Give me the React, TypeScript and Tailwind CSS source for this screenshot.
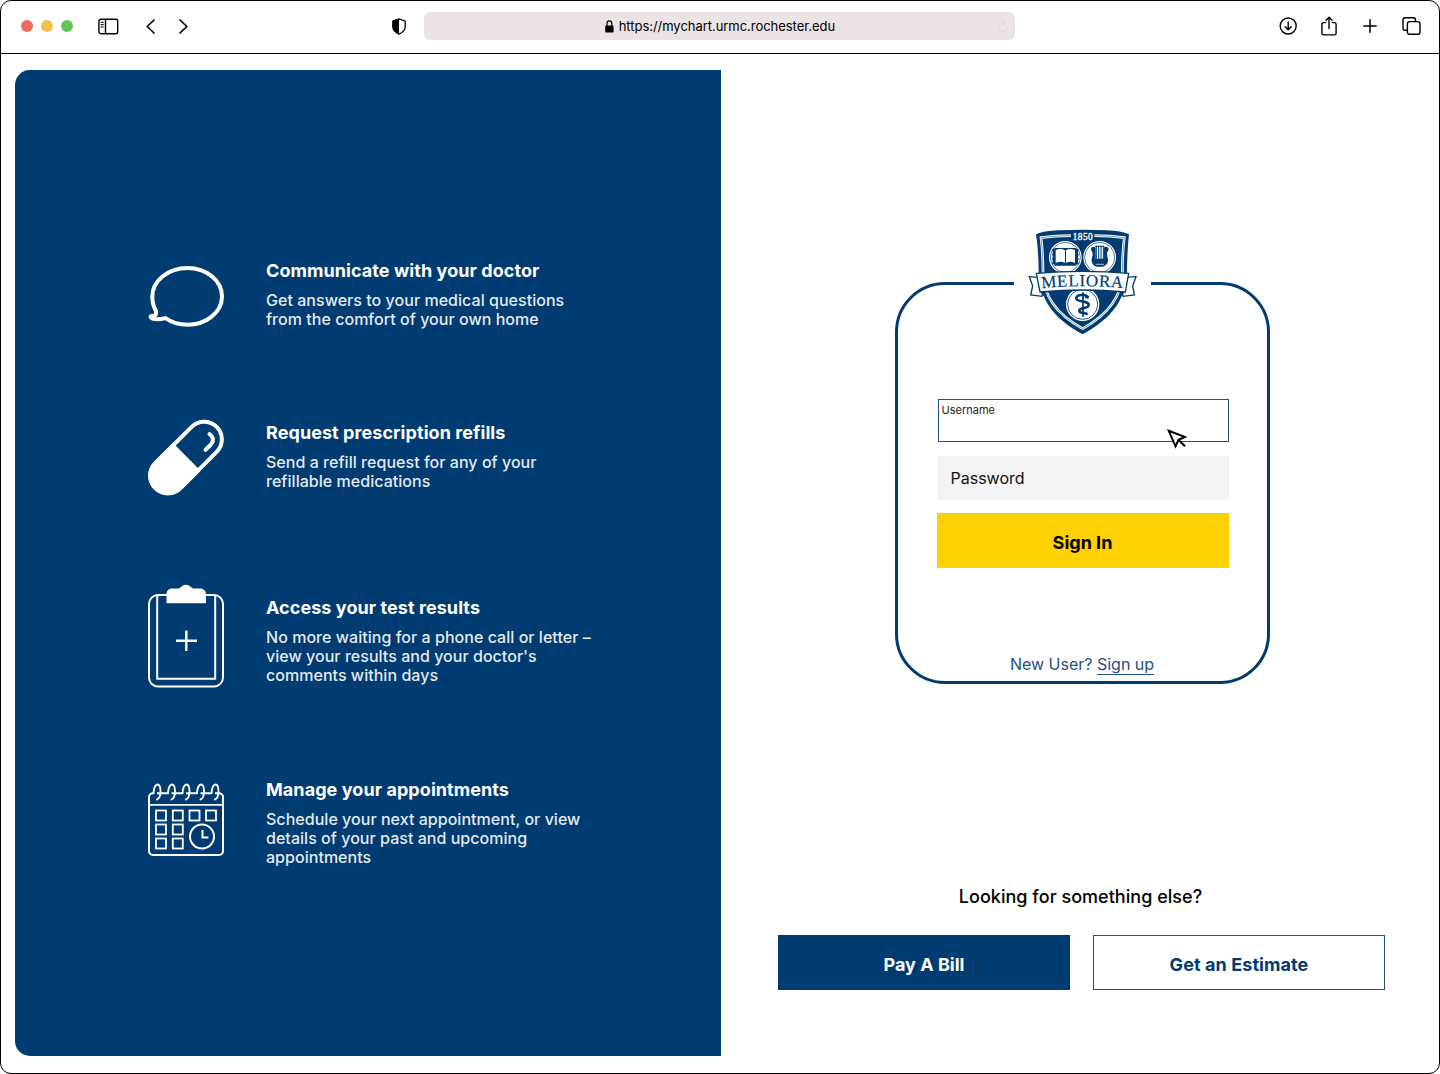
import React from "react";

const NAVY = "#003b71";

function BubbleIcon() {
  return (
    <svg width="76" height="62" viewBox="0 0 76 62" fill="none" stroke="#fff" strokeWidth="4" strokeLinejoin="round" className="mt-1 block shrink-0">
      <path d="M7.200 50.500C8.500 48.500 8.500 47 7.500 45C5 40.500 4.300 35.500 4.300 31.500C4.300 15.500 20.500 3 39.500 3C58.500 3 74 15.500 74 31.500C74 47.500 58 59.700 39.500 59.700C31 59.700 23 57 17.500 53.100C14.500 53.900 8 54.900 4 53.300C2.300 52.500 2 51.500 3.800 50.900Z" />
    </svg>
  );
}

function PillIcon() {
  return (
    <svg width="76" height="77" viewBox="0 0 76 77" fill="none" className="block shrink-0">
      <g transform="rotate(-45 38 38.500)">
        <rect x="-5.400" y="20.800" width="86.800" height="35.400" rx="17.700" stroke="#fff" strokeWidth="4" />
        <path d="M39 18.800H12.600a19.700 19.700 0 0 0 0 39.400H39Z" fill="#fff" />
      </g>
      <path d="M61.500 15.200C66 18.500 65.800 22.500 62.500 26L57.500 30.800" stroke="#fff" strokeWidth="4" strokeLinecap="round" />
    </svg>
  );
}

function ClipboardIcon() {
  return (
    <svg width="76" height="104" viewBox="0 0 76 104" fill="none" stroke="#fff" className="block shrink-0">
      <rect x="1" y="11" width="74" height="91.500" rx="9" strokeWidth="2" />
      <path d="M9.200 11V94.800H67.200V11" strokeWidth="2" />
      <path d="M18.500 19.300V10.500C18.500 6.500 21 4.600 25 4.600H30C32.500 4.600 34 0.800 38 0.800S43.500 4.600 46 4.600H51C55.500 4.600 58 6.500 58 10.500V19.300Z" fill="#fff" stroke="none" />
      <path d="M38.300 46.500V67M28 56.700H49" strokeWidth="2.400" />
    </svg>
  );
}

const squares = [
  [8, 27.500], [24.800, 27.500], [41.500, 27.500], [58, 27.500],
  [8, 41.500], [24.800, 41.500],
  [8, 55.500], [24.800, 55.500],
];

function CalendarIcon() {
  return (
    <svg width="76" height="74" viewBox="0 0 76 74" fill="none" stroke="#fff" strokeWidth="1.800" className="mt-[3px] block shrink-0">
      <rect x="1" y="10.300" width="74" height="61.700" rx="4" strokeWidth="2" />
      <path d="M1 21.800H75" />
      {[9, 23.500, 38, 52.500, 67].map((x) => (
        <g key={x}>
          <path d={`M${x - 1.500} 8.500V12.500`} stroke={NAVY} strokeWidth="3" />
          <path d={`M${x - 3.500} 11C${x - 3.500} 5 ${x - 1.500} 1.500 ${x + 0.500} 1.500C${x + 2.500} 1.500 ${x + 3.500} 4.500 ${x + 3.500} 8.500C${x + 3.500} 13 ${x + 2} 16 ${x - 0.800} 16.800`} />
        </g>
      ))}
      {squares.map(([x, y]) => (
        <rect key={`${x}-${y}`} x={x} y={y} width="10" height="10" />
      ))}
      <circle cx="54" cy="53.500" r="14.500" fill={NAVY} stroke="none" />
      <circle cx="54" cy="53.500" r="12" strokeWidth="2" />
      <path d="M54.500 47V54.500H60.500" strokeWidth="2" />
    </svg>
  );
}

function Crest() {
  return (
    <svg width="135" height="125" viewBox="0 0 405 375" fill="none" className="block">
      <path d="M63 43Q84 33 130 31Q203 27 275 31Q320 33 342 43Q337 85 336 150C335 235 293 294 203 343C112 294 73 235 71 150Q70 85 63 43Z" fill={NAVY} />
      <path d="M168 47Q120 47 78 53Q84 100 84 158C86 228 122 281 203 326C283 281 320 228 322 158Q322 100 328 53Q285 47 238 47" stroke="#fff" strokeWidth="8" />
      <path d="M168 47Q120 47 78 53Q84 100 84 158C86 228 122 281 203 326C283 281 320 228 322 158Q322 100 328 53Q285 47 238 47" stroke={NAVY} strokeWidth="1.500" />
      <text x="203" y="60" textAnchor="middle" fill="#fff" stroke="#fff" strokeWidth="1" fontFamily="Liberation Serif, serif" fontSize="28" textLength="60">1850</text>

      {[151, 254].map((x) => (
        <g key={x}>
          <circle cx={x} cy="112" r="49" fill="#fff" />
          <circle cx={x} cy="112" r="45" stroke={NAVY} strokeWidth="2" />
        </g>
      ))}
      <path d="M118 87V84H184V87H189V133H184V137H118V133H113V87Z" fill={NAVY} />
      <path d="M122 90C133 85 143 86 150 91V129C143 125 133 124 122 129ZM180 90C169 85 160 86 153 91V129C160 125 169 124 180 129Z" fill="#fff" />
      <path d="M112 91H117M112 104H117M112 117H117M112 130H117M186 91H191M186 104H191M186 117H191M186 130H191" stroke={NAVY} strokeWidth="5" />

      <path d="M228 88C228 80 238 78 242 84V116H266V84C270 78 281 80 281 88C281 93 276 95 276 101C276 111 280 114 279 123C278 133 268 140 262 140H246C240 140 230 133 230 123C229 114 233 111 233 101C233 95 228 93 228 88Z" fill={NAVY} />
      <path d="M240 79H268M244 77V120M251 77V120M258 77V120M265 77V120" stroke={NAVY} strokeWidth="3" />
      <path d="M242 133H267" stroke="#fff" strokeWidth="2" />

      <circle cx="203" cy="253" r="50" fill="#fff" />
      <circle cx="203" cy="253" r="45" stroke={NAVY} strokeWidth="2.500" />
      <path d="M204 217V290" stroke={NAVY} strokeWidth="5" />
      <path d="M217 230C211 223 186 222 184 234C182 248 221 240 221 254C221 268 193 261 193 272C193 283 214 276 215 282" stroke={NAVY} strokeWidth="8" strokeLinecap="round" />
      <path d="M211 229L221 233" stroke={NAVY} strokeWidth="9" />

      <path d="M73 172L43 170L53 198L47 225L81 229L88 198ZM332 172L363 170L353 198L358 225L324 229L317 198Z" fill="#fff" stroke={NAVY} strokeWidth="4" strokeLinejoin="miter" />
      <path d="M76 216L86 229L89 214ZM330 216L319 229L316 214Z" fill={NAVY} />
      <path d="M64 160Q203 148 341 160L331 216Q203 204 75 216Z" fill="#fff" stroke={NAVY} strokeWidth="4" />
      <path id="motto" d="M80 205Q203 192 328 205" />
      <text fill={NAVY} stroke={NAVY} strokeWidth="0.500" fontFamily="Liberation Serif, serif" fontSize="51" textLength="244">
        <textPath href="#motto" textLength="244">MELIORA</textPath>
      </text>
    </svg>
  );
}

const features = [
  {
    icon: <BubbleIcon />,
    title: "Communicate with your doctor",
    lines: ["Get answers to your medical questions", "from the comfort of your own home"],
    row: "h-[158px]",
    text: "",
  },
  {
    icon: <PillIcon />,
    title: "Request prescription refills",
    lines: ["Send a refill request for any of your", "refillable medications"],
    row: "h-[165px]",
    text: "pt-1",
  },
  {
    icon: <ClipboardIcon />,
    title: "Access your test results",
    lines: ["No more waiting for a phone call or letter –", "view your results and your doctor's", "comments within days"],
    row: "h-[196px]",
    text: "pt-[14px]",
  },
  {
    icon: <CalendarIcon />,
    title: "Manage your appointments",
    lines: ["Schedule your next appointment, or view", "details of your past and upcoming", "appointments"],
    row: "h-[90px]",
    text: "",
  },
];

function Toolbar() {
  return (
    <header className="flex h-[53px] shrink-0 items-center border-b border-black pb-[2px] pl-5 pr-[18px] text-black">
      <div className="flex gap-2">
        <span className="size-3 rounded-full bg-[#ed6a5e]" />
        <span className="size-3 rounded-full bg-[#f5bf4f]" />
        <span className="size-3 rounded-full bg-[#61c554]" />
      </div>
      <svg width="21" height="17" viewBox="0 0 21 17" fill="none" stroke="currentColor" className="ml-[25px]">
        <rect x="0.900" y="1.300" width="18.800" height="14.400" rx="2" strokeWidth="1.400" />
        <path d="M7.500 1.300V15.700" strokeWidth="1.400" />
        <path d="M2.700 4.300H5.700M2.700 6.600H5.700M2.700 8.900H5.700" strokeWidth="1" />
      </svg>
      <svg width="9" height="15" viewBox="0 0 9 15" fill="none" stroke="currentColor" strokeWidth="1.700" strokeLinecap="round" strokeLinejoin="round" className="ml-[27px]">
        <path d="M8 1L1.200 7.500L8 14" />
      </svg>
      <svg width="9" height="15" viewBox="0 0 9 15" fill="none" stroke="currentColor" strokeWidth="1.700" strokeLinecap="round" strokeLinejoin="round" className="ml-6">
        <path d="M1 1L7.800 7.500L1 14" />
      </svg>
      <svg width="14" height="17" viewBox="0 0 14 17" fill="none" className="ml-[204px]">
        <path d="M7 0.800L13.200 3V9C13.200 12.500 10.500 14.500 7 16.200C3.500 14.500 0.800 12.500 0.800 9V3Z" stroke="currentColor" strokeWidth="1.300" strokeLinejoin="round" />
        <path d="M7 0.800L0.800 3V9C0.800 12.500 3.500 14.500 7 16.200Z" fill="currentColor" />
      </svg>
      <div className="relative ml-[18.400px] flex h-7 w-[591px] items-center justify-center rounded-md bg-[#ece3e4]">
        <svg width="9" height="13" viewBox="0 0 9 13" fill="none" className="mr-[5px]">
          <rect x="0.200" y="5.500" width="8.400" height="7" rx="1.200" fill="currentColor" />
          <path d="M2 6V3.500A2.400 2.600 0 0 1 6.800 3.500V6" stroke="currentColor" strokeWidth="1.200" />
        </svg>
        <span className="whitespace-nowrap text-[13px] leading-5 tracking-[-0.040px]">https://mychart.urmc.rochester.edu</span>
        <svg width="12" height="14" viewBox="0 0 12 14" fill="none" stroke="#dedbdb" strokeWidth="1.100" strokeLinecap="round" strokeLinejoin="round" className="absolute right-[6px] top-[7px]">
          <path d="M7.500 3H6A4.800 4.800 0 1 0 10.800 7.800M5.500 0.800L8 3L5.500 5.500" />
        </svg>
      </div>
      <div className="ml-auto flex items-center">
        <svg width="18" height="18" viewBox="0 0 18 18" fill="none" stroke="currentColor" strokeWidth="1.400" strokeLinecap="round" strokeLinejoin="round">
          <circle cx="9.200" cy="9" r="8" />
          <path d="M9.200 5V12.500M6.200 9.700L9.200 12.700L12.200 9.700" />
        </svg>
        <svg width="16" height="20" viewBox="0 0 16 20" fill="none" stroke="currentColor" strokeWidth="1.400" strokeLinecap="round" strokeLinejoin="round" className="ml-6">
          <path d="M4.800 6.600H2.500Q0.900 6.600 0.900 8.200V17.300Q0.900 18.900 2.500 18.900H13.500Q15.100 18.900 15.100 17.300V8.200Q15.100 6.600 13.500 6.600H11.200M8 12.500V1.300M5 4.200L8 1.200L11 4.200" />
        </svg>
        <svg width="14" height="14" viewBox="0 0 14 14" fill="none" stroke="currentColor" strokeWidth="1.500" strokeLinecap="round" className="ml-[26px]">
          <path d="M7 0.800V13.200M0.800 7H13.200" />
        </svg>
        <svg width="19" height="18" viewBox="0 0 19 18" fill="none" stroke="currentColor" strokeWidth="1.400" strokeLinejoin="round" className="ml-[25px]">
          <rect x="5.400" y="4.600" width="12.600" height="12.600" rx="2.200" />
          <path d="M5.400 13.300H3.200Q1 13.300 1 11.100V3Q1 0.800 3.200 0.800H11.300Q13.500 0.800 13.500 3V4.600" />
        </svg>
      </div>
    </header>
  );
}

export default function App() {
  return (
    <div className="flex h-[1074px] w-[1440px] flex-col overflow-hidden rounded-[11px] border border-black bg-white font-['Inter','Liberation_Sans',sans-serif]">
      <Toolbar />
      <main className="flex pl-[14px] pt-4">
        <section className="h-[986px] w-[706px] shrink-0 rounded-l-[15px] bg-[#003b71] pl-[133px] pt-[191px] text-white">
          {features.map((f) => (
            <div key={f.title} className={`flex items-start gap-[42px] ${f.row}`}>
              {f.icon}
              <div className={f.text}>
                <h2 className="whitespace-nowrap text-[18px] font-bold leading-5 tracking-[0.070px]">{f.title}</h2>
                <p className="mt-[10px] text-[16px] font-medium leading-[19px] tracking-[0.035px] text-[#e3eaf0]">
                  {f.lines.map((line) => (
                    <span key={line} className="block whitespace-nowrap">{line}</span>
                  ))}
                </p>
              </div>
            </div>
          ))}
        </section>

        <section className="ml-[57px] w-[608px] pt-[212px]">
          <div className="relative mx-auto h-[402px] w-[375px] rounded-[50px] border-[3px] border-[#003b71] pl-[39px] pt-[114px]">
            <div className="absolute -top-[65px] left-[116px] w-[137px] bg-white">
              <div className="flex justify-center"><Crest /></div>
            </div>
            <div className="relative ml-px h-[43px] w-[291px] border border-[#24507f] pl-[3px] pt-[3px] text-[11px] leading-[14px] text-[#222]">
              Username
              <svg width="20" height="20" viewBox="0 0 20 20" fill="#fff" stroke="#000" strokeWidth="2" strokeLinejoin="miter" className="absolute left-[228px] top-[29px]">
                <path d="M1.800 1.800L18 8L11.500 10.800L8.500 17.300Z" />
                <path d="M11 10.500L18 17.200" />
              </svg>
            </div>
            <div className="ml-px mt-[14px] flex h-[43.500px] w-[291px] items-center bg-[#f3f3f3] pl-[13px] pt-px text-[16px] text-[#111]">Password</div>
            <button className="mt-[13.500px] flex h-[55px] w-[292px] items-center justify-center bg-[#ffd100] pt-1 text-[18px] font-bold text-black">Sign In</button>
            <p className="mt-[86px] w-[291px] whitespace-nowrap text-center text-[16px] leading-5 text-[#24507f]">
              New User? <span className="inline-block border-b border-[#24507f] leading-[19px]">Sign up</span>
            </p>
          </div>

          <p className="mt-[201px] w-[605px] text-center text-[18px] font-medium leading-6 tracking-[0.030px] text-black">Looking for something else?</p>
          <div className="mt-[26px] flex gap-[23px]">
            <button className="flex h-[55px] w-[292px] items-center justify-center bg-[#003b71] pt-[3px] text-[18px] font-bold text-white">Pay A Bill</button>
            <button className="flex h-[55px] w-[292px] items-center justify-center border border-[#24507f] pt-[3px] text-[18px] font-bold tracking-[0.090px] text-[#003b71]">Get an Estimate</button>
          </div>
        </section>
      </main>
    </div>
  );
}
